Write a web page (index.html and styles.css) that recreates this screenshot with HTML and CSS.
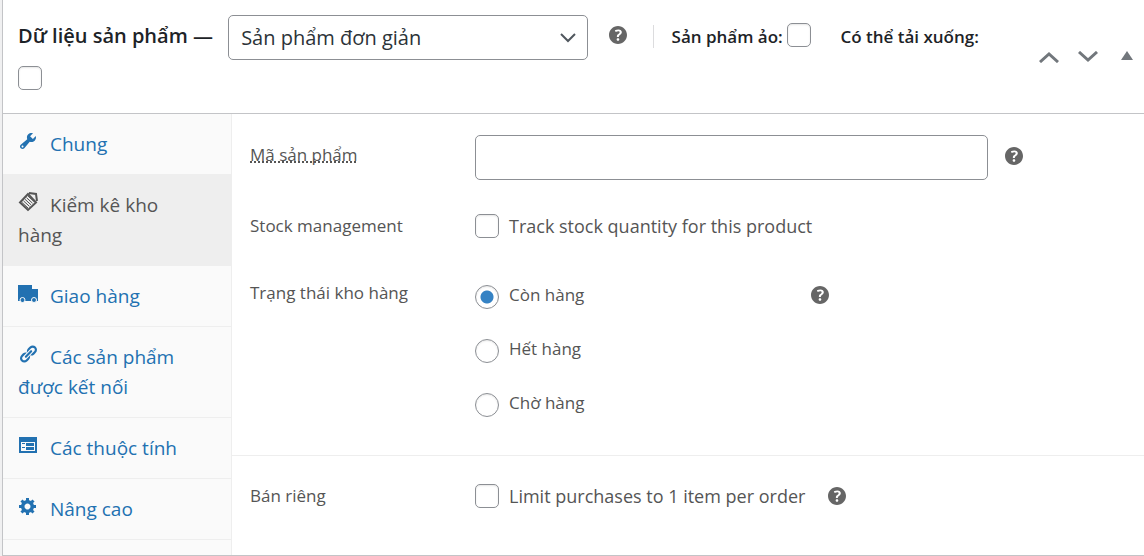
FILE: index.html
```html
<!DOCTYPE html>
<html lang="vi">
<head>
  <meta charset="UTF-8" />
  <meta name="viewport" content="width=device-width, initial-scale=1.0" />
  <title>Dữ liệu sản phẩm</title>
  <link rel="stylesheet" href="styles.css">
</head>
<body>
  <!-- Shared icons -->
  <svg class="sprite" aria-hidden="true">
    <symbol id="help" viewBox="3 3 14 14">
      <path d="M17 10c0-3.87-3.14-7-7-7-3.87 0-7 3.13-7 7s3.13 7 7 7c3.86 0 7-3.13 7-7zm-6.3 1.48H9.14v-.43c0-.38.08-.7.24-.98s.46-.57.88-.89c.41-.29.68-.53.81-.71.14-.18.2-.39.2-.62 0-.25-.09-.44-.28-.58-.19-.13-.45-.19-.79-.19-.58 0-1.25.19-2 .57l-.64-1.28c.87-.49 1.8-.74 2.77-.74.81 0 1.45.2 1.92.58.48.39.71.91.71 1.55 0 .43-.09.8-.29 1.11-.19.32-.57.67-1.11 1.06-.38.28-.61.49-.71.63-.1.15-.15.34-.15.57v.35zm-1.47 2.74c-.18-.17-.27-.42-.27-.73 0-.33.08-.58.26-.75s.43-.25.77-.25c.32 0 .57.09.75.26s.27.42.27.74c0 .3-.09.55-.27.72-.18.18-.43.27-.75.27-.33 0-.58-.09-.76-.26z"/>
    </symbol>
  </svg>

  <div class="postbox">
    <div class="postbox-header">
      <h2>
        <span class="title">Dữ liệu sản phẩm —</span>
        <span class="select-wrap">
          <select aria-label="Loại sản phẩm">
            <option>Sản phẩm đơn giản</option>
          </select>
          <svg viewBox="0 0 16 10" aria-hidden="true"><path d="M1 1l7 7 7-7"/></svg>
        </span>
        <svg class="help" aria-hidden="true"><use href="#help"/></svg>
        <label class="type-option first">Sản phẩm ảo: <input type="checkbox"></label>
        <label class="type-option">Có thể tải xuống: <input type="checkbox"></label>
      </h2>
      <div class="handle-actions">
        <button type="button" aria-label="Lên"><svg class="chevron" viewBox="0 0 20 12"><path d="M1 11l9-8 9 8"/></svg></button>
        <button type="button" aria-label="Xuống"><svg class="chevron" viewBox="0 0 20 12"><path d="M1 1l9 8 9-8"/></svg></button>
        <button type="button" aria-label="Thu gọn"><svg class="toggle" viewBox="0 0 12 12"><path d="M6 0l6 9H0z"/></svg></button>
      </div>
    </div>

    <div class="panel-wrap">
      <ul class="tabs">
        <li><a href="#general"><svg class="icon" viewBox="0 0 20 20"><path d="M16.68 9.77c-1.34 1.34-3.3 1.67-4.95.99l-5.41 6.52c-.99.99-2.59.99-3.58 0s-.99-2.59 0-3.57l6.52-5.42c-.68-1.65-.35-3.61.99-4.95 1.28-1.28 3.12-1.62 4.72-1.06l-2.89 2.89 2.82 2.82 2.86-2.87c.53 1.58.18 3.39-1.08 4.65zM3.81 16.21c.4.39 1.04.39 1.43 0 .4-.4.4-1.04 0-1.43-.39-.4-1.03-.4-1.43 0-.39.39-.39 1.03 0 1.43z"/></svg>Chung</a></li>
        <li class="active"><a href="#inventory"><svg class="icon" viewBox="0 0 20 20"><path class="board" d="M10 2l8 8.500-8 7.500-8-7.500z"/><path class="board" d="M11 1l7 1 1 7"/><path class="line" d="M4 10.500l6 5.500M5.500 8.900l6 5.500M7 7.300l6 5.500M8.500 5.700l6 5.500M10 4.100l6 5.500"/></svg>Kiểm kê kho hàng</a></li>
        <li><a href="#shipping"><svg class="icon" viewBox="0 0 20 20"><path d="M0 2h14v4h6v12H0z"/><circle class="wheel" cx="4.500" cy="17" r="2.500"/><circle class="wheel" cx="16" cy="17" r="2.500"/></svg>Giao hàng</a></li>
        <li><a href="#linked"><svg class="icon" viewBox="0 0 20 20"><path d="M17.740 2.760c1.680 1.690 1.680 4.410 0 6.100l-1.530 1.520c-1.120 1.120-2.700 1.470-4.140 1.090l2.620-2.610.76-.77.76-.76c.84-.84.84-2.200 0-3.040-.84-.85-2.200-.85-3.040 0l-.77.76-3.380 3.380c-.37-1.440-.02-3.020 1.100-4.140l1.520-1.530c1.690-1.680 4.420-1.680 6.100 0zM8.590 13.430l5.340-5.340c.42-.42.42-1.100 0-1.520-.44-.43-1.130-.39-1.530 0l-5.330 5.340c-.42.42-.42 1.100 0 1.520.44.43 1.130.39 1.520 0zm-.76 2.290l4.140-4.150c.38 1.440.03 3.020-1.090 4.140l-1.520 1.530c-1.690 1.680-4.410 1.680-6.100 0-1.680-1.680-1.680-4.420 0-6.100l1.530-1.520c1.120-1.120 2.700-1.470 4.140-1.100l-4.140 4.150c-.85.84-.85 2.200 0 3.050.84.84 2.200.84 3.040 0z"/></svg>Các sản phẩm được kết nối</a></li>
        <li><a href="#attributes"><svg class="icon" viewBox="0 0 20 20"><path fill-rule="evenodd" d="M1 2h18v16H1zM3 7v9h14V7zM4 8h3v1H4zM8 8h8v3H8zM4 12h3v1H4zM8 12h8v3H8z"/></svg>Các thuộc tính</a></li>
        <li><a href="#advanced"><svg class="icon" viewBox="0 0 20 20"><path d="M18 12h-2.180c-.17.7-.44 1.350-.81 1.930l1.540 1.540-2.100 2.100-1.540-1.540c-.58.36-1.230.63-1.910.79V19H8v-2.180c-.68-.16-1.330-.43-1.910-.79l-1.540 1.540-2.120-2.120 1.540-1.540c-.36-.58-.63-1.230-.79-1.910H1V9.030h2.170c.16-.7.44-1.350.8-1.940L2.430 5.550l2.100-2.100 1.540 1.540c.58-.37 1.240-.64 1.930-.81V2h3v2.180c.68.16 1.330.43 1.910.79l1.540-1.540 2.120 2.120-1.540 1.540c.36.59.64 1.240.8 1.940H18V12zm-8.500 1.500c1.660 0 3-1.340 3-3s-1.340-3-3-3-3 1.340-3 3 1.340 3 3 3z"/></svg>Nâng cao</a></li>
      </ul>

      <div class="panel" id="inventory">
        <div class="options-group">
          <div class="form-field sku">
            <label class="name" for="sku"><abbr>Mã sản phẩm</abbr></label>
            <input type="text" id="sku">
            <svg class="help" aria-hidden="true"><use href="#help"/></svg>
          </div>
          <div class="form-field">
            <label class="name" for="manage-stock">Stock management</label>
            <input type="checkbox" id="manage-stock">
            <label class="description" for="manage-stock">Track stock quantity for this product</label>
          </div>
          <div class="form-field stock-status" role="radiogroup" aria-labelledby="stock-status">
            <span class="name" id="stock-status">Trạng thái kho hàng</span>
            <ul class="radios">
              <li><label><input type="radio" name="stock" checked>Còn hàng</label></li>
              <li><label><input type="radio" name="stock">Hết hàng</label></li>
              <li><label><input type="radio" name="stock">Chờ hàng</label></li>
            </ul>
            <svg class="help" aria-hidden="true"><use href="#help"/></svg>
          </div>
        </div>
        <div class="options-group sold">
          <div class="form-field">
            <label class="name" for="sold-individually">Bán riêng</label>
            <input type="checkbox" id="sold-individually">
            <label class="description" for="sold-individually">Limit purchases to 1 item per order</label>
            <svg class="help" aria-hidden="true"><use href="#help"/></svg>
          </div>
        </div>
      </div>
    </div>
  </div>
</body>
</html>
```
FILE: styles.css
```css
/* Base styling */
* {
  box-sizing: border-box;
}
body {
  margin: 0 0 0 2px;
  background: #f0f0f1;
  color: #555;
  font-family: "Open Sans", "Noto Sans", sans-serif;
  font-size: 18px;
}
ul {
  list-style: none;
  margin: 0;
  padding: 0;
}
.sprite {
  display: none;
}
.postbox {
  background: #fff;
  border: solid #c3c4c7;
  border-width: 0 0 1px 1px;
}
/* Form controls */
input, select {
  appearance: none;
  margin: 0;
  background: #fff;
  border: 1px solid #8c8f94;
  border-radius: 5px;
  font-family: inherit;
  color: #2c3338;
}
input[type="checkbox"], input[type="radio"] {
  width: 24px;
  height: 24px;
  flex: none;
  box-shadow: inset 0 1px 2px rgba(0, 0, 0, 0.1);
}
input[type="radio"] {
  border-radius: 50%;
}
input[type="radio"]:checked {
  background: radial-gradient(circle, #3582c4 6px, #fff 7px);
}
.help {
  width: 18px;
  height: 18px;
  flex: none;
  fill: #666;
}
/* Header */
.postbox-header {
  display: flex;
  align-items: center;
  border-bottom: 1px solid #c3c4c7;
}
.postbox-header h2 {
  flex: 1;
  margin: 0;
  padding: 15px 36px 15px 15px;
  color: #1d2327;
  font-size: 20px;
  font-weight: 600;
  line-height: 37px;
}
.select-wrap {
  display: inline-block;
  position: relative;
  vertical-align: middle;
  margin: 0 16px 0 10px;
}
.select-wrap select {
  display: block;
  width: 360px;
  height: 45px;
  padding: 0 40px 0 12px;
  font-size: 20px;
}
.select-wrap svg {
  position: absolute;
  right: 12px;
  top: 18px;
  width: 16px;
  height: 10px;
  fill: none;
  stroke: #50575e;
  stroke-width: 2;
}
h2 .help {
  vertical-align: -1px;
}
.type-option {
  margin-right: 24px;
  font-size: 17px;
}
.type-option.first {
  border-left: 1px solid #dcdcde;
  margin-left: 20px;
  padding-left: 18px;
}
.type-option input {
  vertical-align: middle;
  margin-top: -6px;
}
.handle-actions {
  display: flex;
  gap: 5px;
}
.handle-actions button {
  display: flex;
  align-items: center;
  justify-content: center;
  width: 34px;
  height: 36px;
  padding: 0;
  border: 0;
  background: none;
}
.chevron {
  width: 20px;
  height: 12px;
  fill: none;
  stroke: #72777c;
  stroke-width: 3;
}
.toggle {
  width: 12px;
  height: 12px;
  fill: #72777c;
}
/* Tabs */
.panel-wrap {
  display: flex;
}
.tabs {
  width: 229px;
  flex: none;
  padding-bottom: 15px;
  background: #fafafa;
  border-right: 1px solid #eee;
}
.tabs a {
  display: block;
  padding: 15px 28px 15px 15px;
  border-bottom: 1px solid #eee;
  color: #2271b1;
  font-size: 19px;
  line-height: 30px;
  text-decoration: none;
}
.tabs .active a {
  background: #eee;
  color: #555;
}
.icon {
  width: 20px;
  height: 20px;
  margin-right: 12px;
  fill: currentColor;
}
.board, .line {
  fill: none;
  stroke: currentColor;
  stroke-width: 2;
}
.line {
  stroke-width: 1;
}
.wheel {
  stroke: #fafafa;
  stroke-width: 1;
}
/* Panel */
.panel {
  flex: 1;
}
.options-group {
  padding: 4px 18px 8px;
  border-bottom: 1px solid #eee;
}
.options-group.sold {
  padding-top: 11px;
  border: 0;
}
.form-field {
  display: flex;
  align-items: center;
  padding: 17px 0;
  line-height: 24px;
}
.name {
  width: 225px;
  flex: none;
  font-size: 17px;
}
.name abbr {
  text-decoration: underline dotted 2px;
  text-decoration-skip-ink: none;
  text-underline-offset: 1px;
}
.sku .name {
  padding-bottom: 6px;
}
.sku input {
  flex: 1;
  max-width: 513px;
  height: 45px;
  padding: 0 12px;
  font-size: 18px;
}
.form-field .help {
  margin-left: 17px;
}
.form-field.sku .help {
  margin-bottom: 4px;
}
.description {
  margin: 0 6px 0 10px;
  font-size: 18px;
}
.stock-status {
  align-items: flex-start;
}
.stock-status .name {
  padding-top: 9px;
}
.radios {
  width: 37%;
  padding: 13px 0;
  display: grid;
  gap: 30px;
}
.radios label {
  display: flex;
  gap: 10px;
  font-size: 17px;
  line-height: 20px;
}
.stock-status .help {
  margin: 14px 0 0 12px;
}
```
